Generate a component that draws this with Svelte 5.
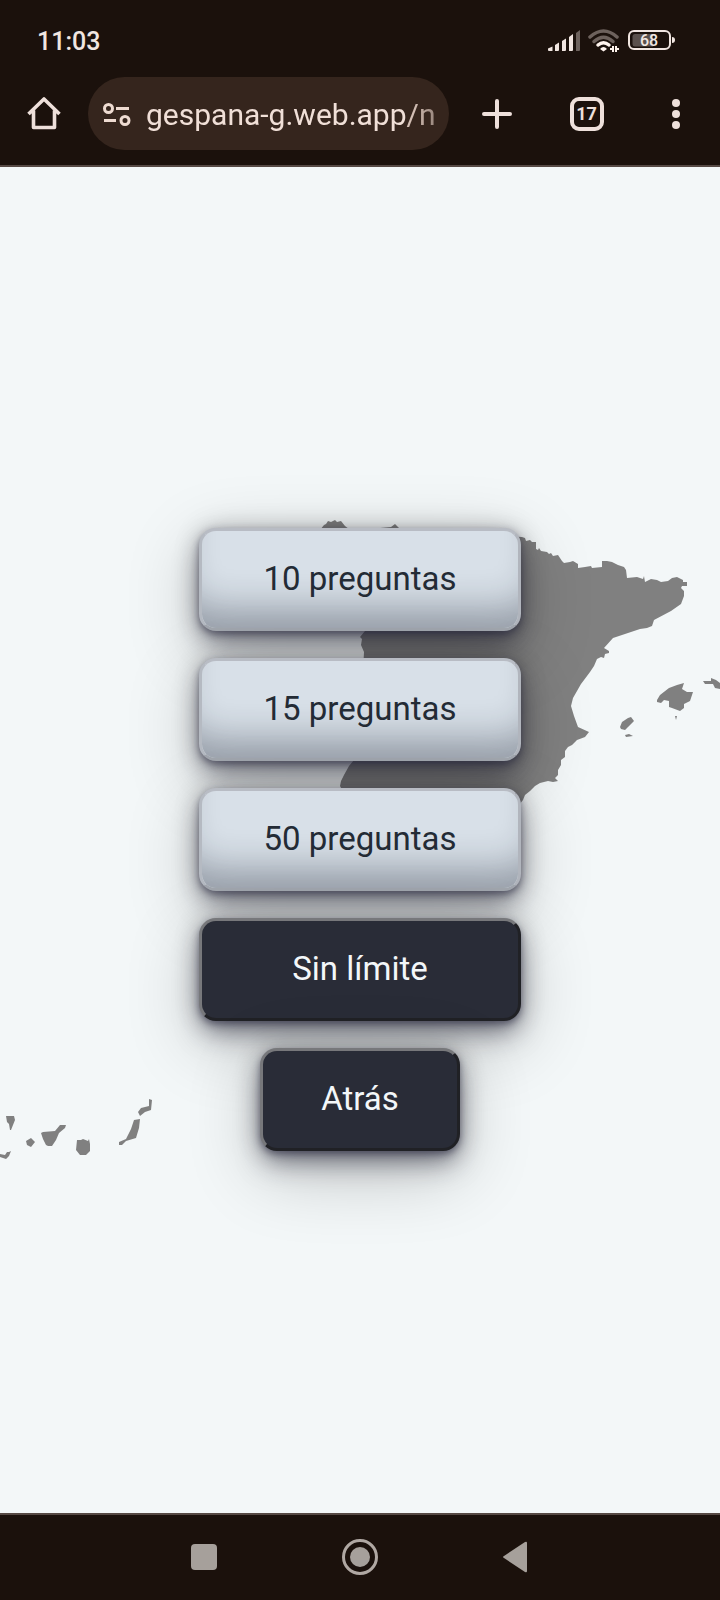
<script>
  const options = [
    { label: '10 preguntas', kind: 'light' },
    { label: '15 preguntas', kind: 'light' },
    { label: '50 preguntas', kind: 'light' },
    { label: 'Sin límite', kind: 'dark' },
    { label: 'Atrás', kind: 'dark narrow' }
  ];
</script>

<div class="screen">
  <header>
    <div class="status">
      <span class="clock">11:03</span>
      <div class="indicators">
        <svg width="32" height="22" viewBox="0 0 32 22" aria-hidden="true">
          <g fill="#f1e6e1">
            <path d="M0 18.500L4.500 16.500V21H1Q0 21 0 20Z" />
            <path d="M7 15L11 12.500V20Q11 21 10 21H7Z" />
            <path d="M14 11L18 8.500V20Q18 21 17 21H14Z" />
            <path d="M21 7L25 4V20Q25 21 24 21H21Z" />
          </g>
          <path d="M28 3L32 0V20Q32 21 31 21H28Z" fill="#6d625d" />
        </svg>
        <svg width="32" height="24" viewBox="0 0 32 24" fill="none" aria-hidden="true">
          <path d="M2 8Q15.500-4 29 8" stroke="#6d625d" stroke-width="3.500" stroke-linecap="round" />
          <path d="M6 12.500Q15.500 4 25 12.500" stroke="#6d625d" stroke-width="3.500" stroke-linecap="round" />
          <path d="M10 16Q15.500 11.500 21 16" stroke="#fff4ee" stroke-width="3.500" stroke-linecap="round" />
          <path d="M12 20Q15.500 16 19 20L15.500 22.500Z" fill="#fff4ee" />
          <path d="M25 23V17M22 20H25M28 17V23M28 20H31" stroke="#fff4ee" stroke-width="2" />
        </svg>
        <svg width="48" height="22" viewBox="0 0 48 22" aria-hidden="true">
          <rect x="1" y="1" width="41" height="18" rx="5" fill="none" stroke="#f1e6e1" stroke-width="2" />
          <path d="M7 4H25V16.500H7Q4.500 16.500 4.500 14V6.500Q4.500 4 7 4Z" fill="#5a504c" />
          <path d="M44 7Q47 7 47 10T44 13Z" fill="#f1e6e1" />
          <text x="21" y="16" text-anchor="middle" font-family="Roboto, sans-serif" font-size="16" font-weight="500" fill="#f1e6e1">68</text>
        </svg>
      </div>
    </div>
    <div class="toolbar">
      <button class="tool" aria-label="Inicio">
        <svg width="34" height="34" viewBox="0 0 34 34" fill="none" stroke="#eee0db" stroke-width="3.600" aria-hidden="true">
          <path d="M1.500 17L17 2L32.500 17M6.500 13.500V30.500H27.500V13.500" stroke-linejoin="round" />
        </svg>
      </button>
      <div class="address">
        <svg width="28" height="24" viewBox="0 0 28 24" fill="none" stroke="#eedbd1" stroke-width="3" aria-hidden="true">
          <circle cx="5.500" cy="5.500" r="4" />
          <path d="M13 5.500H26M1 17.500H13" />
          <circle cx="22" cy="17.500" r="4" />
        </svg>
        <span class="url">gespana-g.web.app<span class="path">/numero</span></span>
      </div>
      <div class="actions">
        <button class="tool" aria-label="Nueva pestaña">
          <svg width="30" height="30" viewBox="0 0 30 30" stroke="#eee0db" stroke-width="4" stroke-linecap="round" aria-hidden="true">
            <path d="M15 2V28M2 15H28" />
          </svg>
        </button>
        <button class="tool"><span class="tabs">17</span></button>
        <button class="tool" aria-label="Más opciones">
          <svg width="10" height="32" viewBox="0 0 10 32" fill="#eee0db" aria-hidden="true">
            <circle cx="5" cy="5" r="4" /><circle cx="5" cy="16" r="4" /><circle cx="5" cy="27" r="4" />
          </svg>
        </button>
      </div>
    </div>
  </header>

  <main>
    <svg class="map" viewBox="0 0 720 640" fill="#808080" aria-hidden="true">
      <!-- Península -->
      <path d="M320 10L324 5L326 4L328 1L331 2L333 1L335 0L337 2L341 1L345 6L349 9L380 8L391 7L395 4L399 8L440 12L522 17L525 18L526 21L530 20L532 22H536V29L538 30L539 28L541 31L547 32L549 34L551 33L553 36L558 35L562 41L564 43L570 42L573 41L578 44V48L585 47L591 46L592 48L602 47V41H607L612 42L618 45L624 47L626 50L627 58L637 57L643 59L644 56L645 62L651 59L657 60L661 62L668 61L672 58L677 57L683 60V62H687V66H682L681 68L684 71V76L681 84L671 91L654 100L652 106L647 108L640 109L628 113L613 118L604 128L609 131V133L605 134L604 138L601 137L599 138L597 139L594 146L590 152L581 164L573 178L571 186L574 196L578 207L589 212L585 217L577 220L572 225L568 227L565 231L565 237L561 240V245L558 250L558 255L555 258L558 261L553 262L548 261L540 263L535 266L530 271L525 275L523 280L515 290L480 300L380 298L350 285L340 266L341 261L344 255L349 246L354 240L358 215L361 180L363 151L364 132L361 125L362 119L360 117L365 111L345 95L318 60Z" />
      <!-- Baleares -->
      <path d="M657 180L660 175L669 168L677 165L684 163L682 169L687 172H693L690 181L684 184L684 188L680 191L672 188L669 187V181L664 180L661 183L657 182Z" />
      <path d="M703 161L711 161L711 158L716 160L720 163V169L715 168L713 164L705 164Z" />
      <path d="M620 207L622 202L628 198L631 197L634 201L628 207L625 210L621 209ZM625 215L629 214L633 216L626 217ZM675 196L677 196L676 200Z" />
      <!-- Canarias -->
      <path d="M6 596H14L15 600L13 605L11 610H10L9 604L7 602ZM0 634L5 635L7 632H9L11 631L9 636L6 639L3 638L0 637ZM26 621L31 618L35 622L31 627L27 625Z" />
      <path d="M41 613L43 612L55 611L60 605L66 605L65 608L59 613L56 620L52 626H48L46 625L43 619Z" />
      <path d="M77 620L81 620L83 619L88 621L89 619L90 624L90 631L86 635H80L76 630Z" />
      <path d="M119 622L126 619L128 615L131 609L134 600L140 599L139 608L136 618L126 621L122 625H119ZM138 592L141 588L149 586L149 579L152 580L151 590L145 592L140 596Z" />
    </svg>
    <nav>
      {#each options as option}
        <button class="option {option.kind}">{option.label}</button>
      {/each}
    </nav>
  </main>

  <footer>
    <button class="tool" aria-label="Recientes">
      <svg width="36" height="36" viewBox="0 0 36 36" fill="#a6a09b" aria-hidden="true"><rect x="5" y="5" width="26" height="26" rx="4" /></svg>
    </button>
    <button class="tool" aria-label="Pantalla de inicio">
      <svg width="36" height="36" viewBox="0 0 36 36" aria-hidden="true">
        <circle cx="18" cy="18" r="16.500" fill="none" stroke="#b0a8a3" stroke-width="3" />
        <circle cx="18" cy="18" r="10" fill="#a6a09b" />
      </svg>
    </button>
    <button class="tool" aria-label="Volver">
      <svg width="36" height="36" viewBox="0 0 36 36" fill="#a6a09b" aria-hidden="true"><path d="M7 17L28 3Q30 2 30 4V32Q30 34 28 33L7 19Q5 18 7 17Z" /></svg>
    </button>
  </footer>
</div>

<style>
  :global(body) { margin: 0; }
  .screen {
    min-height: 100vh;
    display: grid;
    grid-template-rows: auto 1fr auto;
    font-family: Roboto, sans-serif;
    background: #f3f7f8;
  }
  header {
    background: #1b110c;
    border-bottom: 2px solid #564944;
  }
  .status {
    height: 72px;
    padding: 10px 44px 0 37px;
    box-sizing: border-box;
    display: flex;
    align-items: center;
    justify-content: space-between;
  }
  .clock { font-size: 25px; font-weight: 500; color: #f1e6e1; }
  .indicators { display: flex; align-items: center; gap: 8px; }
  .toolbar {
    height: 93px;
    padding: 5px 27px 16px;
    box-sizing: border-box;
    display: grid;
    grid-template-columns: auto 361px 1fr;
    gap: 27px;
    align-items: center;
  }
  .tool {
    padding: 0;
    border: 0;
    background: none;
    display: grid;
    place-items: center;
    color: #eee0db;
    font-family: inherit;
  }
  .address {
    height: 73px;
    padding: 2px 12px 0 15px;
    border-radius: 37px;
    box-sizing: border-box;
    background: #35251d;
    display: flex;
    align-items: center;
    gap: 15px;
  }
  .address svg { flex: none; }
  .url {
    flex: 1;
    overflow: hidden;
    white-space: nowrap;
    font-size: 30px;
    line-height: 40px;
    color: #f0dfd7;
    mask-image: linear-gradient(to right, #000 92%, rgba(0, 0, 0, 0.6));
  }
  .path { color: #d3bfb5; }
  .actions {
    padding-left: 4px;
    display: flex;
    align-items: center;
    justify-content: space-between;
  }
  .actions .tool { width: 34px; height: 48px; }
  .tabs {
    width: 34px;
    height: 34px;
    box-sizing: border-box;
    border: 4px solid #eee0db;
    border-radius: 9px;
    display: grid;
    place-items: center;
    font-size: 18px;
    font-weight: 700;
  }
  main {
    display: grid;
    align-items: center;
    overflow: hidden;
  }
  .map, nav { grid-area: 1 / 1; }
  .map { width: 100%; display: block; }
  nav {
    padding-bottom: 1px;
    display: flex;
    flex-direction: column;
    align-items: center;
    gap: 27px;
  }
  .option {
    width: 322px;
    height: 103px;
    padding: 0 0 2px;
    border: 3px solid;
    border-radius: 17px;
    font-family: inherit;
    font-size: 33px;
    --drop:
      0 3px 7px rgba(35, 35, 60, 0.5),
      0 14px 26px -3px rgba(35, 35, 55, 0.5),
      0 20px 72px rgba(0, 0, 0, 0.24),
      0 0 26px rgba(0, 0, 0, 0.2);
    box-shadow: var(--drop);
  }
  .light {
    color: #232b35;
    border-color: #b8bcc4 #b1b5bd #a1a6ae #b5bac2;
    background: #d8e0e8;
    box-shadow: var(--drop), inset 0 -40px 36px -20px rgba(20, 25, 40, 0.32);
  }
  .dark {
    color: #f3f7f9;
    border-color: #77787b #202125 #202125 #77787b;
    background: #292c37;
  }
  .narrow { width: 200px; }
  footer {
    height: 87px;
    padding: 0 187px 2px 186px;
    box-sizing: border-box;
    border-top: 2px solid #564944;
    background: #1b110c;
    display: flex;
    align-items: center;
    justify-content: space-between;
  }
</style>
